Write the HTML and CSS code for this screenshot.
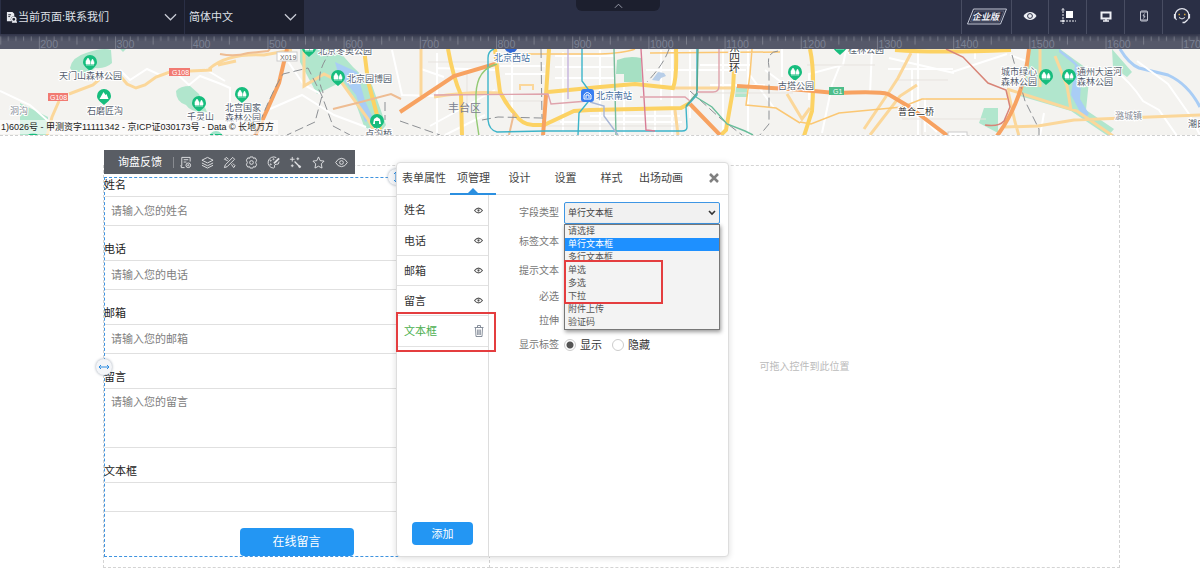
FILE: index.html
```html
<!DOCTYPE html>
<html lang="zh-CN">
<head>
<meta charset="utf-8">
<title>当前页面:联系我们</title>
<link rel="stylesheet" href="styles.css">
</head>
<body>
<header class="topbar">
  <div class="picker picker-page">
    <svg class="page-icon" viewBox="0 0 12 12" width="11" height="11"><path d="M1 0h6l2 2v3a3 3 0 0 0-3 5H1z" fill="#e8eaf0"/><path d="M2.500 3h3M2.500 5h2" stroke="#1c1f2e"/><circle cx="8.500" cy="8" r="2.300" fill="none" stroke="#e8eaf0" stroke-width="1.500"/><path d="M10 9.500l2 2M6.500 11h5" stroke="#e8eaf0" stroke-width="1.300"/></svg>
    <select class="picker-select" aria-label="当前页面"><option>当前页面:联系我们</option></select>
    <svg class="chevron" viewBox="0 0 14 8" width="13" height="8"><path d="M1 1l6 6 6-6"/></svg>
  </div>
  <div class="picker picker-lang">
    <select class="picker-select" aria-label="语言"><option>简体中文</option></select>
    <svg class="chevron" viewBox="0 0 14 8" width="13" height="8"><path d="M1 1l6 6 6-6"/></svg>
  </div>
  <button class="collapse" aria-label="收起"><svg viewBox="0 0 10 6" width="9" height="6"><path d="M1 5l4-4 4 4" fill="none" stroke="#a5a8b5"/></svg></button>
  <nav class="tools">
    <button class="tool tool-edition" aria-label="企业版">
      <svg viewBox="0 0 40 17" width="40" height="17"><path d="M6.500 1h33l-6 15h-33z" fill="none" stroke="#c4c8d6"/><path d="M8 3h29l-4.500 11h-29z" fill="none" stroke="#8c91a5" stroke-width=".5"/><text x="5" y="12" class="edition">企业版</text></svg>
    </button>
    <button class="tool tool-eye" aria-label="预览"><svg viewBox="0 0 14 10" width="14" height="10"><path d="M.500 5Q3 1 7 1t6.500 4Q11 9 7 9T.500 5z" fill="#eef0f5"/><circle cx="7" cy="5" r="2.400" fill="none" stroke="#2a2f45"/></svg></button>
    <button class="tool tool-snap" aria-label="标尺"><svg viewBox="0 0 16 16" width="16" height="16"><path d="M6 3h7v7H6z" fill="#fff"/><path d="M3 0v16" stroke="#eef0f5" stroke-dasharray="2 1"/><path d="M0 13h16" stroke="#eef0f5" stroke-dasharray="2 1"/><path d="M1.500 2h3M1.500 13h3M3 11.500v3" stroke="#eef0f5"/></svg></button>
    <button class="tool" aria-label="电脑"><svg viewBox="0 0 12 11" width="12" height="11"><path d="M1.500 1.500h9v6h-9z" fill="none" stroke="#eef0f5" stroke-width="2"/><path d="M6 8v2M3 10h6" stroke="#eef0f5" stroke-width="1.500"/></svg></button>
    <button class="tool" aria-label="手机"><svg viewBox="0 0 10 12" width="10" height="12"><rect x="1.500" y="1" width="7" height="10" rx="1" fill="none" stroke="#c2c5d1"/><path d="M1.500 2h7M1.500 10h7" stroke="#c2c5d1"/><path d="M5.500 3.500L4 6h2L4.500 8.500" fill="none" stroke="#c2c5d1"/></svg></button>
    <button class="tool" aria-label="客服"><svg viewBox="0 0 18 16" width="18" height="16"><path d="M3.500 12A7 7 0 1 1 14.500 12" fill="none" stroke="#e4e6ee" stroke-width="1.200"/><path d="M1.800 6v4.500M16.200 6v4.500" stroke="#e4e6ee" stroke-width="1.800"/><path d="M14.500 12l-3 2.500H9.500" fill="none" stroke="#e4e6ee" stroke-width="1.400"/><path d="M5.500 6.500H7M11 6.500h1.500" stroke="#d7a73a" stroke-width="1.500"/><path d="M6 9.500Q9 12.500 12 9.500" fill="none" stroke="#e4e6ee"/></svg></button>
  </nav>
</header>

<svg class="ruler" viewBox="149 0 1575 20" preserveAspectRatio="xMinYMin slice" aria-hidden="true">
  <defs><pattern id="ticks" width="100" height="20" patternUnits="userSpaceOnUse"><path d="M.700 3v17M50 3v11M10 3v6M20 3v6M30 3v6M40 3v6M60 3v6M70 3v6M80 3v6M90 3v6" stroke="#7c808c" stroke-width="1.200"/></pattern></defs>
  <rect x="149" width="1575" height="20" fill="url(#ticks)"/>
  <g><text x="202" y="18">200</text><text x="302" y="18">300</text><text x="402" y="18">400</text><text x="502" y="18">500</text><text x="602" y="18">600</text><text x="702" y="18">700</text><text x="802" y="18">800</text><text x="902" y="18">900</text><text x="1002" y="18">1000</text><text x="1102" y="18">1100</text><text x="1202" y="18">1200</text><text x="1302" y="18">1300</text><text x="1402" y="18">1400</text><text x="1502" y="18">1500</text><text x="1602" y="18">1600</text><text x="1702" y="18">1700</text></g>
</svg>

<section class="map">
<svg class="map-art" viewBox="0 49 1200 87" preserveAspectRatio="xMinYMin slice">
  <defs>
    <g id="pin"><path d="M-7 0a7 7 0 1 1 14 0c0 4-4 6-7 9c-3-3-7-5-7-9z" fill="#16bd7d"/></g>
    <g id="park"><use href="#pin"/><path d="M-2 -4l2 3v3h-4v-3zM2.500 -3l1.500 3v2h-3v-2zM-4 3h8" fill="#fff" stroke="#fff" stroke-width=".6"/></g>
    <g id="hill"><use href="#pin"/><path d="M-4.500 3l4-7 2 3 1-1 2 5z" fill="#fff"/></g>
  </defs>
  <rect y="49" width="1200" height="87" fill="#f4f3f0"/>
  <g fill="#b1e6cd">
    <path d="M70 68Q72 57 86 53Q103 47 111 50L112 63Q106 69 95 68L86 76Q75 77 70 68z"/>
    <path d="M176 91Q180 86 190 86L199 94L207 112Q191 113 186 105Q176 102 176 91z"/>
    <path d="M20 103l28 14v18H20z"/><path d="M120 49h6l-3 3z"/>
    <path d="M300 49h37l16 18l19 18l14 40l-8 11l-14-10l-11-30l-12-14l-24 12l-17-32z"/>
    <path d="M736 87h11v10h-12z"/>
    <path d="M1029 49h31l30 22l-4 39l28 19l-6 7l-37-25l-51-15zM984 108h14v25l-19-10zM1112 49l20 23-5 5-14-10z"/>
  </g>
  <path d="M335 62l22 10 8 29 8 17-8 4-9-27-18-22z" fill="#a9cdf5"/>
  <path d="M1059 49l12 9 11 11-2 30 9 15-5 5-13-24 4-30-16-13z" fill="#a9cdf5"/>
  <path d="M1120 49q9 15 19 19l29 7q20 9 32 32" fill="none" stroke="#a9cdf5" stroke-width="3"/>

  <g fill="none" stroke="#fff" stroke-width="2">
    <path d="M120 70l10 10 17-11 13 6 16-2 13 12 11-9 21 8 9 4v38M205 69l20 12"/>
    <path d="M270 109l32-14 32 20 32 12M287 60l17 25 17 9M392 50l10 45 35 1M437 53v82M437 68l58 2M421 69l23 8M512 50v64M505 74h41M555 56h60M555 67h60M555 78h60M563 52v80M600 50v85M624 85v50M661 50v50M672 50v85M655 108v27M690 50v68M646 70h100M700 65h50M710 85h55M723 49v86M748 50v85M765 70l27 20M750 75l24 33M782 49v28"/>
    <path d="M840 65l-8 20-10 48M846 50l-3 15-34 9 0 26M872 49l-2 45M888 69h65M918 49v87M889 58l65 15M952 72l55-18M912 68v40l25 24M925 98v34M975 49v10M1010 55l16 6M1113 69q17 12 30 32l16 9 18 26M1137 61l31 23 21 30 11 21M1040 136l4-23"/>
    <path d="M0 91l30 14 35 31M430 126l65-36M445 135l40-20M500 66h45M560 122h122M590 116h90"/>
  </g>
  <g fill="none" stroke="#e7e3df"><path d="M428 62h88M467 72v34M505 101h40M699 93h94M540 126h140M807 65h68M898 80h50M902 119h84M922 119v16"/></g>
  <path d="M617 60q12-5 24-2l1 24h-18v-8h-8z" fill="#a6e0c3"/>
  <path d="M652 80l6-8 6 1 2 3-5 2-2 3z" fill="#b8cee8"/>
  <g fill="none" stroke="#fbd79a" stroke-width="3">
    <path d="M47 136l5-19 7-16M69 94l24-9 8-7M117 72l10 12 9 4 9-3 11-8 14-5M190 71l22-1M218 65l18-4M209 69q18-16 55-14l28-5M304 49v37l20-12 18 9 26 36 9 17M421 49v47M434 97q35-6 66-4M1040 49v38M864 129l23-34 11-17 13-25M787 94l15 25 8-11M870 135l30-39 17-11M1007 89l70 22 36 25M1005 127l33-1 36-6 126-5M1055 56l12 30 4 24M1008 91l7 31 4 14M672 88h60M675 110l3 25"/>
    <path d="M520 90v-5h13v5" stroke-width="2"/>
  </g>
  <g fill="none" stroke="#fbc773" stroke-width="1.500"><path d="M752 49l-2 25-4 31 30 3 24 15M800 122l11 2 28-11 63-6 20-8h85M505 54h95q25-1 35-5M650 53l130-1"/></g>
  <g fill="none" stroke="#fcd263" stroke-width="4">
    <path d="M448 49q5 28 13 46l1 41M495 49q2 22 5 43 6 12 14 21 8 12 19 12h11l30-14 16-1 91-2 9-5M549 49l-3 46M548 92l52-5 35-3 38 4q4-10 3-39M735 49l-2 41-7 40-5 5M810 49q5 23 2 62l-8 25M895 50q40 3 116 0M364 49l4 32 9 34 4 20"/>
  </g>
  <g fill="none" stroke="#f7a261" stroke-width="4"><path d="M287 49l-8 34q-13 30-24 53M400 112l54-36 41-12M737 86l53 3 46 4q44-2 52 1l20 12 40 30M690 104l30 31M1029 49q-5 50-32 87M546 95l-3 41"/></g>
  <g fill="none" stroke="#eebc92" stroke-width="2"><path d="M220 54q15 3 28-1l20-2 2-2M333 109l24-6 34-9 10 5M514 113l-5 22"/></g>
  <g fill="none" stroke="#8d9094" stroke-width="1" stroke-dasharray="9 4"><path d="M333 49q-20 24-10 43l-8 30-28 13M255 135q15-40 28-61l25-6 14 28 11 30 17 9M482 120l16-3 43 1M541 49l1 70M669 49q-5 15-22 33M690 91l30 27 22 17M778 51q-12 1-9 16v57l-10 12M1012 55l13 46 14 28v7M400 121l40 14M385 102v18"/></g>
  <path d="M946 49l17 8 25 26 18 7 4 17-6 14q-5 6-19 4" fill="none" stroke="#d88477" stroke-width="1.500"/>
  <g fill="none" stroke-width="1.400"><path d="M494 49q-6 2-6 9v62q1 10 9 12l48-1h137q5 0 5-4l-1-20 11-12V49M582 49v32l6 8v13l-9 11-1 22" stroke="#3db4c9"/><path d="M614 49l2 86" stroke="#78bd9b"/><path d="M698 49l-1 44-11 13" stroke="#58a98e"/><path d="M696 97l16 10 15 17 18 7 8 4" stroke="#69bd9b"/><path d="M641 49l5 81 9 1" stroke="#d87d96"/><path d="M568 49v50" stroke="#c5b3dd"/><path d="M434 95l114-1 3 10 37-3M640 97h45l5 4M697 92h16q6 0 6-6V49" stroke="#dfa3ac"/><path d="M497 64q-20 5-21 30v22l3 20" stroke="#93ca74"/><path d="M590 102l14 4v10l14 19" stroke="#a8b6d6"/></g>

  <use href="#park" x="90" y="62"/><use href="#park" x="199" y="103"/><use href="#park" x="242" y="94"/><use href="#park" x="338" y="77"/><use href="#park" x="309" y="48"/><use href="#hill" x="104" y="96"/><use href="#park" x="795" y="72"/><use href="#park" x="840" y="46"/><use href="#park" x="1046" y="76"/><use href="#park" x="1069" y="76"/><use href="#hill" x="33" y="140"/><use href="#park" x="216" y="138"/>
  <use href="#pin" x="377" y="121"/><path d="M373 124l1-5 3-2 3 2 1 5h-2v-3h-4v3z" fill="#fff"/>
  <path d="M505 49h12q-2 4-6 4t-6-4z" fill="#3168d4"/>
  <rect x="581" y="89" width="13" height="13" rx="3" fill="#387ef1"/><path d="M584 99v-4q3-5 7 0v4M584 99h7M586 98v-3h3v3" stroke="#fff" fill="none"/>
  <g class="road"><rect x="169" y="68" width="21" height="8" fill="#f17a72"/><text x="172" y="75">G108</text><rect x="48" y="93" width="20" height="8" fill="#f17a72"/><text x="50" y="100">G108</text><rect x="829" y="87" width="15" height="8" fill="#4dbd8a"/><text x="833" y="94">G1</text></g>
  <rect x="277" y="52" width="20" height="9" fill="#fff" stroke="#ccc"/><text x="280" y="60" class="route">X019</text>
  <rect x="948" y="132" width="19" height="6" fill="#fff" stroke="#ccc"/>
  <g class="place">
    <text x="59" y="79">天门山森林公园</text><text x="87" y="114">石磨匠沟</text><text x="187" y="120">千灵山</text><text x="225" y="111">北宫国家</text><text x="225" y="121">森林公园</text><text x="318" y="54">北京冬奥公园</text><text x="347" y="82">北京园博园</text><text x="365" y="137">卢沟桥</text><text x="778" y="89">古塔公园</text><text x="848" y="53">桂林公园</text><text x="1001" y="75">城市绿心</text><text x="1001" y="85">森林公园</text><text x="1077" y="75">通州大运河</text><text x="1077" y="85">森林公园</text><text x="1188" y="127">潮白河</text>
  </g>
  <g class="place dark"><text x="898" y="115">普合二桥</text></g>
  <g class="place ring"><text x="729" y="52">东</text><text x="729" y="62">四</text><text x="729" y="72">环</text></g>
  <g class="place station"><text x="494" y="61">北京西站</text><text x="596" y="99">北京南站</text></g>
  <g class="place faint"><text x="10" y="114">洞沟</text><text x="1115" y="119">潞城镇</text></g>
  <text x="448" y="112" class="district">丰台区</text>
</svg>
<p class="map-credit">1)6026号 - 甲测资字11111342 - 京ICP证030173号 - Data © 长地万方</p>
</section>

<main class="canvas">
  <div class="cell cell-form">
    <form class="feedback">
      <div class="field"><label for="f1">姓名</label><input id="f1" type="text" placeholder="请输入您的姓名"></div>
      <div class="field"><label for="f2">电话</label><input id="f2" type="text" placeholder="请输入您的电话"></div>
      <div class="field"><label for="f3">邮箱</label><input id="f3" type="text" placeholder="请输入您的邮箱"></div>
      <div class="field"><label for="f4">留言</label><textarea id="f4" placeholder="请输入您的留言"></textarea></div>
      <div class="field"><label for="f5">文本框</label><input id="f5" type="text"></div>
      <button class="primary submit" type="button">在线留言</button>
    </form>

    <div class="toolbar">
      <span class="toolbar-title">询盘反馈</span>
      <button aria-label="表单"><svg viewBox="0 0 14 14"><path d="M6 12.500H2.500v-2H1.500M12 6V1.500H3v9M5 4h5M5 6.500h3"/><circle cx="10" cy="10" r="2.500"/><circle cx="10" cy="10" r=".7"/></svg></button>
      <button aria-label="图层"><svg viewBox="0 0 14 14"><path d="M7 1.500l6 3-6 3-6-3zM1 7.500l6 3 6-3M1 10l6 3 6-3"/></svg></button>
      <button aria-label="设计"><svg viewBox="0 0 14 14"><path d="M1.500 12.500l1-3 8-8 2 2-8 8zM5 5L1.500 3.500 3.500 1.500 6 3.500M9 9l2.500 3.500 1.500-2-2.500-2.500"/></svg></button>
      <button aria-label="设置"><svg viewBox="0 0 14 14"><path d="M5.500 1h3l.5 1.500 2-.500 1.500 2.500L11.500 7l1 2.500L11 12l-2-.5-.5 1.500h-3L5 11.500 3 12 1.500 9.500 2.500 7l-1-2.500L3 2l2 .5z"/><circle cx="7" cy="7" r="2"/></svg></button>
      <button aria-label="样式"><svg viewBox="0 0 14 14"><path d="M10 1.700A6 6 0 1 0 7 13q2-.5 1-2.500 0-1.500 2-1.500 3 .5 3-3"/><path d="M13 2.500L7.500 8" stroke-width="2"/><circle cx="4" cy="5" r=".6"/><circle cx="7" cy="3.500" r=".6"/><circle cx="4" cy="9" r=".6"/></svg></button>
      <button aria-label="动画"><svg viewBox="0 0 14 14"><path d="M3.500 1v5M1 3.500h5M9.500 1.500v3M8 3h3M3.500 9v3M2 10.500h3"/><path d="M6 6l5 5" stroke-width="1.400"/><circle cx="11.500" cy="11.500" r="1" fill="#e3e4e6"/></svg></button>
      <button class="star" aria-label="收藏"><svg viewBox="0 0 14 14"><path d="M7 1l1.800 4 4.200.5-3 3 .8 4.500L7 11l-3.800 2 .8-4.500-3-3L5.200 5z"/></svg></button>
      <button class="last" aria-label="显示"><svg viewBox="0 0 14 14"><path d="M.700 7Q3 2.500 7 2.500T13.300 7Q11 11.500 7 11.500T.700 7z"/><circle cx="7" cy="7" r="2"/></svg></button>
    </div>
    <span class="handle handle-left"><svg viewBox="0 0 12 6" width="12" height="6"><path d="M3 1L1 3l2 2M9 1l2 2-2 2M1 3h10"/></svg></span>
    <span class="handle handle-top"><svg viewBox="0 0 6 12" width="6" height="12"><path d="M1 3l2-2 2 2M1 9l2 2 2-2M3 1v10"/></svg></span>

    <section class="panel">
      <nav class="tabs">
        <button class="tab">表单属性</button><button class="tab active">项管理</button><button class="tab">设计</button><button class="tab">设置</button><button class="tab">样式</button><button class="tab">出场动画</button>
        <button class="close" aria-label="关闭"><svg viewBox="0 0 10 10" width="10" height="10"><path d="M1 1l8 8M9 1L1 9" stroke="#808080" stroke-width="2.500"/></svg></button>
      </nav>
      <div class="panel-body">
        <div class="items">
          <ul class="item-list">
            <li>姓名<button aria-label="显示姓名"><svg viewBox="0 0 10 8" width="9" height="7"><path d="M.500 4Q5-1.500 9.500 4 5 9.500.500 4z" class="eye"/><circle cx="5" cy="4" r="1.300" fill="#555"/></svg></button></li>
            <li>电话<button aria-label="显示电话"><svg viewBox="0 0 10 8" width="9" height="7"><path d="M.500 4Q5-1.500 9.500 4 5 9.500.500 4z" class="eye"/><circle cx="5" cy="4" r="1.300" fill="#555"/></svg></button></li>
            <li>邮箱<button aria-label="显示邮箱"><svg viewBox="0 0 10 8" width="9" height="7"><path d="M.500 4Q5-1.500 9.500 4 5 9.500.500 4z" class="eye"/><circle cx="5" cy="4" r="1.300" fill="#555"/></svg></button></li>
            <li>留言<button aria-label="显示留言"><svg viewBox="0 0 10 8" width="9" height="7"><path d="M.500 4Q5-1.500 9.500 4 5 9.500.500 4z" class="eye"/><circle cx="5" cy="4" r="1.300" fill="#555"/></svg></button></li>
            <li class="current">文本框<button aria-label="删除文本框"><svg viewBox="0 0 10 12" width="10" height="12"><path d="M.500 2.500h9M3.500 2.500v-2h3v2M1.500 3l.5 8.500h6l.5-8.500M3.700 4.500v5.500M5 4.500v5.500M6.300 4.500v5.500" fill="none" stroke="#7b8391" stroke-width=".9"/></svg></button><span class="mark mark-item"></span></li>
          </ul>
          <button class="primary add">添加</button>
        </div>
        <div class="settings">
          <div class="row tall"><label for="type">字段类型</label>
            <div class="combo">
              <select id="type"><option>单行文本框</option></select>
              <svg class="combo-arrow" viewBox="0 0 8 6" width="8" height="6"><path d="M1 1l3 3 3-3" fill="none" stroke="#333" stroke-width="1.600"/></svg>
              <ul class="options" role="listbox"><li>请选择</li><li class="selected">单行文本框</li><li>多行文本框</li><li>单选</li><li>多选</li><li>下拉</li><li>附件上传</li><li>验证码</li></ul>
              <span class="mark mark-options"></span>
            </div></div>
          <div class="row tall"><label for="lt">标签文本</label><input id="lt" type="text"></div>
          <div class="row tall"><label for="pt">提示文本</label><input id="pt" type="text"></div>
          <div class="row"><label for="rq">必选</label><input id="rq" type="checkbox"></div>
          <div class="row"><label for="st">拉伸</label><input id="st" type="checkbox"></div>
          <div class="row"><span class="row-name">显示标签</span><div class="radios"><label><input type="radio" name="show" checked>显示</label><label><input type="radio" name="show">隐藏</label></div></div>
        </div>
      </div>
    </section>
  </div>
  <div class="cell cell-drop">可拖入控件到此位置</div>
</main>
</body>
</html>
```
FILE: styles.css
```css
* { box-sizing: border-box; }
body { margin: 0; background: #fff; color: #333; font: 11px/16px "Liberation Sans", "Noto Sans CJK SC", sans-serif; overflow-x: hidden; }
button, input, select, textarea { font: inherit; color: inherit; margin: 0; }
button { border: 0; background: none; padding: 0; display: flex; align-items: center; justify-content: center; }
ul { list-style: none; margin: 0; padding: 0; }

.topbar { position: relative; z-index: 2; display: flex; height: 34px; background: #2a2f45; box-shadow: 0 1px 4px #2a2e42; }
.picker { display: flex; align-items: center; background: #1c1f2e; color: #dfe1e8; padding: 0 7px 0 5px; }
.picker-page { width: 185px; border-left: 1px solid #2a2f45; border-right: 1px solid #2a2f45; }
.picker-lang { width: 119px; padding-left: 4px; }
.picker-select { flex: 1; min-width: 0; appearance: none; border: 0; background: transparent; padding: 0; }
.page-icon { flex: none; margin-right: 1px; }
.chevron { flex: none; fill: none; stroke: #c9ccd6; stroke-width: 1.3; }
.collapse { position: absolute; top: 0; left: 48%; width: 84px; height: 11px; border-radius: 0 0 6px 6px; background: #1c1f2e; }
.tools { display: flex; margin-left: auto; }
.tool { width: 38px; padding-bottom: 2px; border-left: 1px solid #484d62; }
.tool-edition { width: 50px; }
.tool-eye { width: 37px; }
.edition { font-size: 9px; font-weight: bold; font-style: italic; fill: #eef0f5; }

.ruler { display: block; width: 100%; height: 15px; background: linear-gradient(#3f4357, #555869 50%); }
.ruler text { font-size: 14px; fill: #7b8193; }

.map { position: relative; height: 87px; border-bottom: 1px dashed #d0d0d0; overflow: hidden; }
.map-art { display: block; width: 100%; height: 100%; }
.place text { font-size: 9px; fill: #555e6e; stroke: #fff; stroke-width: 2px; paint-order: stroke; }
.place.dark text { fill: #333; }
.place.ring text { font-size: 11px; fill: #333; }
.place.station text { fill: #44709f; }
.place.faint text { fill: #888e98; }
.district { font-size: 11px; fill: #7b8190; }
.road text { font-size: 7px; fill: #fff; }
.route { font-size: 7px; fill: #666; }
.map-credit { position: absolute; left: 0; bottom: 1px; margin: 0; padding: 0 4px 0 1px; font-size: 9px; line-height: 14px; color: #222; background: rgba(255, 255, 255, .6); white-space: nowrap; }

.canvas { display: grid; grid-template-columns: 387fr 630fr; margin: 29px 80px 0 103px; }
.cell { border: 1px dashed #d4d4d4; min-width: 0; }
.cell-form { position: relative; padding-top: 11px; padding-bottom: 10px; }
.cell-drop { border-left: 0; display: flex; align-items: center; justify-content: center; font-size: 10px; color: #bbb; }

.feedback { display: flex; flex-direction: column; gap: 16px; border: 1px dashed #3f93df; color: #222; }
.field { display: flex; flex-direction: column; gap: 4px; }
.field label { margin-left: -1px; line-height: 14px; }
.field input, .field textarea { width: 100%; height: 30px; padding: 0 6px; border: solid #e0e0e0; border-width: 1px 0; outline: 0; background: #fff; display: block; }
.field textarea { height: 60px; padding-top: 5px; resize: none; }
.field ::placeholder { color: #808080; opacity: 1; }
.primary { background: #2396f3; color: #fff; border-radius: 4px; }
.submit { align-self: center; width: 114px; height: 28px; font-size: 12px; }

.toolbar { position: absolute; left: 0; top: -16px; display: flex; height: 24px; width: 251px; background: #595d64; align-items: center; }
.toolbar-title { color: #fff; padding: 0 11px 0 14px; border-right: 1px solid #888b90; line-height: 11px; }
.toolbar button { width: 22px; }
.toolbar .star { width: 25px; }
.toolbar .last { width: 20px; }
.toolbar svg { width: 13px; height: 13px; fill: none; stroke: #e3e4e6; stroke-width: 1; }
.handle { position: absolute; width: 16px; height: 16px; border-radius: 50%; background: #f3f5f8; box-shadow: 0 0 3px #9aa4b0; display: flex; align-items: center; justify-content: center; }
.handle svg { fill: none; stroke: #2a8ae0; }
.handle-left { left: -8px; top: 193px; }
.handle-top { left: 284px; top: 3px; }

.panel { position: absolute; left: 292px; top: -4px; width: 333px; height: 395px; display: flex; flex-direction: column; background: #fff; border: 1px solid #ddd; border-radius: 4px; box-shadow: 0 1px 6px rgba(0, 0, 0, .14); color: #444; }
.tabs { display: flex; height: 32px; border-bottom: 1px solid #e2e2e2; }
.tab { position: relative; min-width: 46px; padding: 0 4px 2px 5px; height: 32px; white-space: nowrap; }
.tab.active { border-bottom: 2px solid #2b8fe0; padding-bottom: 0; }
.tab.active::after { content: ""; position: absolute; left: 18px; bottom: 0; border: solid transparent; border-width: 0 5px 5px; border-bottom-color: #2b8fe0; }
.close { margin-left: auto; width: 28px; padding-bottom: 2px; }
.panel-body { flex: 1; display: flex; }
.items { width: 92px; display: flex; flex-direction: column; border-right: 1px solid #ddd; }
.item-list { flex: 1; }
.item-list li { position: relative; display: flex; align-items: center; justify-content: space-between; height: 30px; padding: 0 5px 0 7px; border-bottom: 1px solid #e2e2e2; color: #333; }
.item-list li:first-child, .item-list li.current { height: 31px; }
.item-list li.current { color: #4caf50; padding-right: 4px; }
.eye { fill: none; stroke: #555; stroke-width: 1.3; }
.add { align-self: center; width: 61px; height: 23px; margin-bottom: 11px; }
.settings { flex: 1; padding: 3px 8px 0 0; font-size: 10px; color: #777; }
.row { display: grid; grid-template-columns: 70px 1fr; column-gap: 5px; align-items: center; height: 24px; }
.row.tall { height: 29px; }
.row > label, .row-name { text-align: right; }
.row > input[type="text"] { width: 100%; height: 22px; border: 1px solid #ccc; }
.row > input[type="checkbox"] { justify-self: start; }
.combo { position: relative; }
.combo select { display: block; width: 100%; height: 22px; appearance: none; padding: 0 3px; font-size: 9px; color: #444; background: #f1f1f1; border: 1px solid #3e96e4; border-radius: 2px; }
.combo-arrow { position: absolute; right: 4px; top: 8px; }
.options { position: absolute; z-index: 1; left: 0; right: 0; top: 22px; background: #f3f3f3; border: 1px solid #777; box-shadow: 1px 2px 4px rgba(0, 0, 0, .4); font-size: 9px; line-height: 13px; color: #555; }
.options li { padding-left: 3px; }
.options .selected { background: #1e90ff; color: #fff; }
.mark { position: absolute; z-index: 2; border: 2px solid #e43d3f; pointer-events: none; }
.mark-item { left: -1px; top: -4px; width: 100px; height: 40px; }
.mark-options { left: 0; top: 58px; width: 99px; height: 44px; }
.radios { display: flex; gap: 10px; font-size: 11px; color: #333; }
.radios label { display: flex; align-items: center; gap: 4px; }
.radios input { appearance: none; width: 12px; height: 12px; border: 1px solid #ccc; border-radius: 50%; background: #fff; }
.radios input:checked { background: radial-gradient(circle, #555 3px, #fff 4px); }
```
